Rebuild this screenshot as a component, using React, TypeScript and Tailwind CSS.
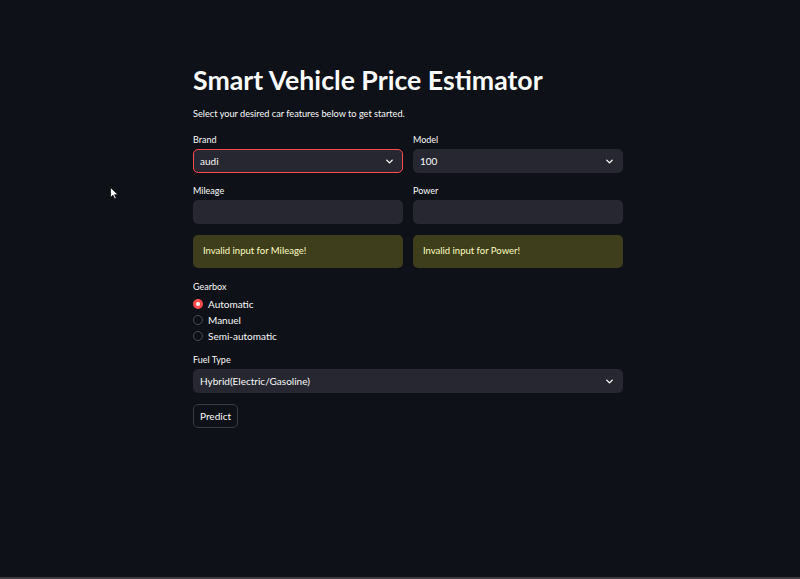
import { ChevronDown } from 'lucide-react';

function Label({ children }: { children: React.ReactNode }) {
    return <div className="text-[9px] leading-[12px] text-[#fafafa] mb-[3px]">{children}</div>;
}

function Select({ value, active }: { value: string; active?: boolean }) {
    return (
        <div
            className={
                "flex items-center h-[24px] rounded-[5px] bg-[#262730] pl-[6px] pr-[7px] border " +
                (active ? "border-[#ff4b4b]" : "border-transparent")
            }
        >
            <span className="flex-1 text-[10px] text-[#fafafa]">{value}</span>
            <ChevronDown size={11} strokeWidth={3} className="text-[#fafafa]" />
        </div>
    );
}

function Warning({ text }: { text: string }) {
    return (
        <div className="h-[33px] rounded-[5px] bg-[#3e3d1c] flex items-center px-[10px] text-[9.5px] text-[#ffffc2]">
            {text}
        </div>
    );
}

function Radio({ label, checked }: { label: string; checked?: boolean }) {
    return (
        <div className="flex items-center gap-[5px] h-[16px]">
            {checked ? (
                <span className="w-[10px] h-[10px] rounded-full bg-[#ff4b4b] flex items-center justify-center">
                    <span className="w-[4px] h-[4px] rounded-full bg-white" />
                </span>
            ) : (
                <span className="w-[10px] h-[10px] rounded-full border border-[#4a4c57]" />
            )}
            <span className="text-[10px] text-[#fafafa]">{label}</span>
        </div>
    );
}

export default function App() {
    return (
        <div
            className="relative w-[800px] h-[579px] bg-[#0e1117] overflow-hidden flex flex-col"
            style={{ fontFamily: "Lato, 'Noto Sans', sans-serif" }}
        >
            <div className="flex-1">
                <div className="w-[430px] ml-[193px] pt-[64px]">
                    <h1 className="text-[26.7px] leading-[32px] font-bold text-[#fafafa]">
                        Smart Vehicle Price Estimator
                    </h1>
                    <p className="mt-[11px] text-[9.2px] leading-[14px] text-[#fafafa]">
                        Select your desired car features below to get started.
                    </p>

                    <div className="grid grid-cols-2 gap-x-[10px] mt-[13px]">
                        <div>
                            <Label>Brand</Label>
                            <Select value="audi" active />
                        </div>
                        <div>
                            <Label>Model</Label>
                            <Select value="100" />
                        </div>
                        <div className="mt-[12px]">
                            <Label>Mileage</Label>
                            <div className="h-[24px] rounded-[5px] bg-[#262730]" />
                        </div>
                        <div className="mt-[12px]">
                            <Label>Power</Label>
                            <div className="h-[24px] rounded-[5px] bg-[#262730]" />
                        </div>
                        <div className="mt-[11px]">
                            <Warning text="Invalid input for Mileage!" />
                        </div>
                        <div className="mt-[11px]">
                            <Warning text="Invalid input for Power!" />
                        </div>
                    </div>

                    <div className="mt-[13px]">
                        <Label>Gearbox</Label>
                        <div className="flex flex-col mt-[2px]">
                            <Radio label="Automatic" checked />
                            <Radio label="Manuel" />
                            <Radio label="Semi-automatic" />
                        </div>
                    </div>

                    <div className="mt-[10px]">
                        <Label>Fuel Type</Label>
                        <Select value="Hybrid(Electric/Gasoline)" />
                    </div>

                    <button className="mt-[11px] h-[24px] px-[6px] rounded-[5px] border border-[#3a3b45] bg-[#0e1117] text-[10px] text-[#fafafa]">
                        Predict
                    </button>
                </div>
            </div>
            <div className="h-[2px] bg-[#3d3d3d]" />

            {/* mouse pointer */}
            <svg className="absolute left-[110px] top-[187px]" width="9" height="13" viewBox="0 0 9 13">
                <path d="M0.5 0.5 L0.5 10.5 L3 8.2 L4.8 12 L6.3 11.3 L4.6 7.7 L8 7.7 Z" fill="#ffffff" stroke="#111" strokeWidth="0.8" />
            </svg>
        </div>
    );
}
